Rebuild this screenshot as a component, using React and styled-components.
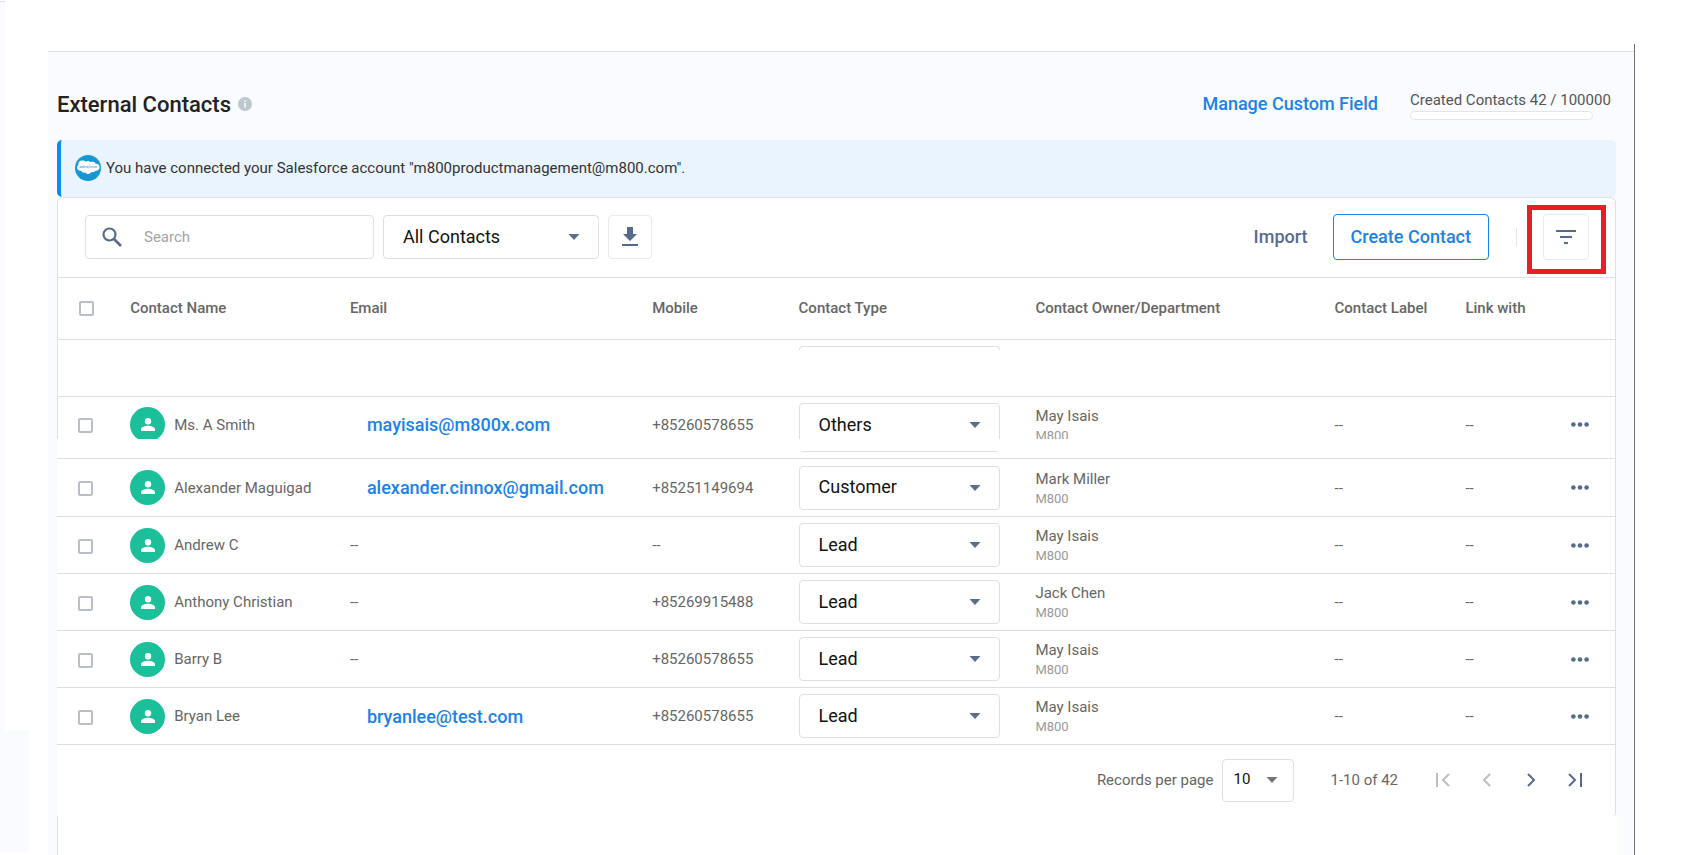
import { useState } from "react";
import styled, { createGlobalStyle, css } from "styled-components";

const contacts = [
  { name: "Ms. A Smith", email: "mayisais@m800x.com", mobile: "+85260578655", type: "Others", owner: "May Isais", height: 62, cut: true },
  { name: "Alexander Maguigad", email: "alexander.cinnox@gmail.com", mobile: "+85251149694", type: "Customer", owner: "Mark Miller", height: 58 },
  { name: "Andrew C", type: "Lead", owner: "May Isais" },
  { name: "Anthony Christian", mobile: "+85269915488", type: "Lead", owner: "Jack Chen" },
  { name: "Barry B", mobile: "+85260578655", type: "Lead", owner: "May Isais" },
  { name: "Bryan Lee", email: "bryanlee@test.com", mobile: "+85260578655", type: "Lead", owner: "May Isais" },
];

const Caret = ({ color = "#5a6e8c" }) => (
  <svg width="12" height="6" viewBox="0 0 12 6" aria-hidden="true">
    <path d="M0.500 0h11L6 6z" fill={color} />
  </svg>
);

const SalesforceLogo = () => (
  <svg width="26" height="26" viewBox="0 0 26 26" aria-hidden="true">
    <circle cx="13" cy="13" r="13" fill="#1798d5" />
    <path
      d="M11 6.700c1-1.100 3.300-1.100 4.300.4 2.300-1 4.700-.2 5.500 1.600 2.300-.2 3.900 1.500 3.800 3.500-.1 2.300-2 3.900-4.200 3.500-1 1.600-2.600 2-4.100 1.400-1.100 2.200-4.400 2.500-5.700.3-1.900.8-3.800.1-4.400-1.600C3.600 16 2 14.400 2 12.600c0-1.100.5-2 1.400-2.700C3 7.500 4.400 5.800 6.600 5.600c1.700-.2 3.300.1 4.400 1.100z"
      fill="#fff"
    />
    <text x="13" y="13" textAnchor="middle" fontSize="4" fontStyle="italic" fill="#1798d5">
      salesforce
    </text>
  </svg>
);

const App = () => {
  const [search, setSearch] = useState("");
  return (
    <>
      <GlobalStyle />
      <Page>
        <Side>
          <SideTop />
          <SideBottom />
        </Side>
        <Main>
          <Header>
            <Title>External Contacts</Title>
            <InfoButton type="button" aria-label="About external contacts">
              <svg width="14" height="14" viewBox="0 0 14 14" aria-hidden="true">
                <circle cx="7" cy="7" r="7" fill="#bcc8cd" />
                <path d="M7 3.200v1.600M7 6v4.500" stroke="#fff" strokeWidth="1.500" />
              </svg>
            </InfoButton>
            <ManageLink href="#custom-field">Manage Custom Field</ManageLink>
            <Quota>
              <span id="quota">Created Contacts 42 / 100000</span>
              <QuotaBar role="progressbar" aria-labelledby="quota" aria-valuenow={42} aria-valuemax={100000} />
            </Quota>
          </Header>
          <Banner>
            <SalesforceLogo />
            You have connected your Salesforce account "m800productmanagement@m800.com".
          </Banner>
          <Card>
            <Toolbar>
              <SearchBox>
                <svg width="20" height="20" viewBox="0 0 20 20" fill="none" stroke="#566b8c" aria-hidden="true">
                  <circle cx="7.500" cy="7.500" r="6" strokeWidth="2.200" />
                  <path d="M12 12l7 7" strokeWidth="2.600" />
                </svg>
                <SearchInput
                  aria-label="Search"
                  placeholder="Search"
                  value={search}
                  onChange={(e) => setSearch(e.target.value)}
                />
              </SearchBox>
              <FilterSelect>
                <Select aria-label="Contact list" defaultValue="All Contacts">
                  <option>All Contacts</option>
                </Select>
                <Caret />
              </FilterSelect>
              <IconButton type="button" aria-label="Download" $width="44px">
                <svg width="16" height="20" viewBox="0 0 16 20" fill="#566b8c" aria-hidden="true">
                  <path d="M5 0h6v7h4l-7 7-7-7h4zM0 17h16v2H0z" />
                </svg>
              </IconButton>
              <ImportButton type="button">Import</ImportButton>
              <CreateButton type="button">Create Contact</CreateButton>
              <Divider />
              <Highlight>
                <IconButton type="button" aria-label="Filter" $width="46px" $height="46px">
                  <svg width="20" height="14" viewBox="0 0 20 14" fill="#566b8c" aria-hidden="true">
                    <path d="M0 0h20v2H0zM4 6h12v2H4zM8 12h4v2H8z" />
                  </svg>
                </IconButton>
              </Highlight>
            </Toolbar>
            <Table>
              <colgroup>
                <col style={{ width: "4.7%" }} />
                <col style={{ width: "14.1%" }} />
                <col style={{ width: "19.4%" }} />
                <col style={{ width: "9.4%" }} />
                <col style={{ width: "15.2%" }} />
                <col style={{ width: "19.2%" }} />
                <col style={{ width: "8.4%" }} />
                <col style={{ width: "6.7%" }} />
                <col style={{ width: "2.9%" }} />
              </colgroup>
              <thead>
                <HeadRow>
                  <th>
                    <Checkbox aria-label="Select all contacts" />
                  </th>
                  <th>Contact Name</th>
                  <th>Email</th>
                  <th>Mobile</th>
                  <th>Contact Type</th>
                  <th>Contact Owner/Department</th>
                  <th>Contact Label</th>
                  <th>Link with</th>
                  <th aria-label="Actions" />
                </HeadRow>
              </thead>
              <tbody>
                <Row $height={57} $edge>
                  <td colSpan={4} />
                  <TopCell>
                    <SelectEdge />
                  </TopCell>
                  <td colSpan={4} />
                </Row>
                {contacts.map((c) => (
                  <Row key={c.name} $height={c.height || 57} $cut={c.cut}>
                    <td>
                      <Checkbox aria-label={`Select ${c.name}`} />
                    </td>
                    <td>
                      <Person>
                        <Avatar>
                          <svg width="14" height="13" viewBox="0 0 14 13" fill="#fff" aria-hidden="true">
                            <circle cx="7" cy="3.200" r="3.200" />
                            <path d="M0 13v-1.500C0 9 4 7.800 7 7.800s7 1.200 7 3.700V13z" />
                          </svg>
                        </Avatar>
                        {c.name}
                      </Person>
                    </td>
                    <td>{c.email ? <MailLink href={`mailto:${c.email}`}>{c.email}</MailLink> : "--"}</td>
                    <td>{c.mobile || "--"}</td>
                    <TypeCell>
                      <TypeSelect $tall={c.cut}>
                        <Select aria-label={`Contact type of ${c.name}`} defaultValue={c.type}>
                          <option>Lead</option>
                          <option>Customer</option>
                          <option>Others</option>
                        </Select>
                        <Caret />
                      </TypeSelect>
                    </TypeCell>
                    <td>
                      <Owner>{c.owner}</Owner>
                      <Department>M800</Department>
                    </td>
                    <td>--</td>
                    <td>--</td>
                    <td>
                      <MoreButton type="button" aria-label={`More actions for ${c.name}`}>
                        <svg width="18" height="5" viewBox="0 0 18 5" fill="#566b8c" aria-hidden="true">
                          <circle cx="2.400" cy="2.500" r="2.300" />
                          <circle cx="9" cy="2.500" r="2.300" />
                          <circle cx="15.600" cy="2.500" r="2.300" />
                        </svg>
                      </MoreButton>
                    </td>
                  </Row>
                ))}
              </tbody>
            </Table>
            <Pager>
              <label htmlFor="page-size">Records per page</label>
              <PageSize>
                <Select id="page-size" defaultValue="10">
                  <option>10</option>
                </Select>
                <Caret color="#757575" />
              </PageSize>
              <Range>1-10 of 42</Range>
              <PageButton type="button" aria-label="First page" disabled>
                <svg width="14" height="14" viewBox="0 0 14 14" aria-hidden="true">
                  <path d="M1 0v14M13 1L7 7l6 6" />
                </svg>
              </PageButton>
              <PageButton type="button" aria-label="Previous page" disabled>
                <svg width="14" height="14" viewBox="0 0 14 14" aria-hidden="true">
                  <path d="M10 1L4 7l6 6" />
                </svg>
              </PageButton>
              <PageButton type="button" aria-label="Next page">
                <svg width="14" height="14" viewBox="0 0 14 14" aria-hidden="true">
                  <path d="M4 1l6 6-6 6" />
                </svg>
              </PageButton>
              <PageButton type="button" aria-label="Last page">
                <svg width="14" height="14" viewBox="0 0 14 14" aria-hidden="true">
                  <path d="M1 1l6 6-6 6M13 0v14" />
                </svg>
              </PageButton>
            </Pager>
          </Card>
          <Rest />
        </Main>
      </Page>
    </>
  );
};

export default App;

const GlobalStyle = createGlobalStyle`
  * {
    box-sizing: border-box;
  }
  body {
    margin: 0;
    background: #fff;
    color: #666;
    font-family: Roboto, "Liberation Sans", sans-serif;
    font-size: 15px;
  }
  button, input, select {
    font-family: inherit;
  }
`;

const Page = styled.div`
  display: flex;
  min-height: 100vh;
`;

const Side = styled.div`
  flex: none;
  display: flex;
  flex-direction: column;
  width: 48px;
  padding: 1px 0 3px;
`;

const SideTop = styled.div`
  flex: 1;
  width: 5px;
  border-top: 1px solid #dfe1e6;
  background: #fafbff;
`;

const SideBottom = styled.div`
  width: 29px;
  height: 122px;
  background: #fafbff;
`;

const Main = styled.main`
  flex: 1;
  display: flex;
  flex-direction: column;
  margin: 44px 69px 0 0;
  padding: 0 18px 0 9px;
  border-right: 1px solid #6e7074;
  background: linear-gradient(#fff 7px, #dfe0e3 7px, #dfe0e3 8px, #fafbff 8px);
`;

const Header = styled.header`
  display: flex;
  align-items: center;
  height: 96px;
  padding-top: 24px;
`;

const Title = styled.h1`
  margin: 0;
  color: #222;
  font-weight: 500;
  font-size: 22px;
`;

const InfoButton = styled.button`
  display: flex;
  margin-left: 7px;
  padding: 0;
  border: 0;
  background: none;
`;

const ManageLink = styled.a`
  margin-left: auto;
  padding-bottom: 2px;
  color: #1a82e8;
  font-weight: 500;
  font-size: 18px;
  text-decoration: none;
`;

const Quota = styled.div`
  min-width: 206px;
  margin-left: 32px;
  padding-top: 2px;
  color: #555;
  line-height: 18px;
`;

const QuotaBar = styled.div`
  width: 183px;
  height: 9px;
  margin-top: 2px;
  border: 1px solid #e3e5e9;
  border-radius: 5px;
  background: #fff;
`;

const Banner = styled.div`
  display: flex;
  align-items: center;
  gap: 5px;
  height: 57px;
  padding: 0 0 2px 14px;
  border-left: 4px solid #0b8cf0;
  border-radius: 5px;
  background: #e9f4ff;
  color: #333;
`;

const Card = styled.section`
  border: solid #dddfe3;
  border-width: 1px 1px 0 0;
  border-radius: 6px 6px 4px 0;
  background: #fff;
`;

const Toolbar = styled.div`
  display: flex;
  align-items: center;
  height: 80px;
  padding: 0 26px 1px 27px;
  border: solid #dddfe3;
  border-width: 0 0 1px 1px;
  border-top-left-radius: 5px;
`;

const field = css`
  border: 1px solid #dddfe3;
  border-radius: 4px;
  background: #fff;
`;

const SearchBox = styled.div`
  ${field}
  display: flex;
  align-items: center;
  gap: 22px;
  width: 289px;
  height: 44px;
  padding: 0 16px;
`;

const SearchInput = styled.input`
  flex: 1;
  min-width: 0;
  padding: 0;
  border: 0;
  outline: 0;
  color: #333;
  font-size: 15px;
  &::placeholder {
    color: #a4a4a4;
  }
`;

const SelectBox = styled.div`
  ${field}
  display: grid;
  align-items: center;
  height: 44px;
  svg {
    grid-area: 1 / 1;
    justify-self: end;
    margin-right: 18px;
    pointer-events: none;
  }
`;

const Select = styled.select`
  grid-area: 1 / 1;
  width: 100%;
  height: 100%;
  padding: 0 19px 2px;
  border: 0;
  outline: 0;
  appearance: none;
  background: none;
  color: #111;
  font-size: 18px;
`;

const FilterSelect = styled(SelectBox)`
  width: 216px;
  margin: 0 9px;
`;

const TypeSelect = styled(SelectBox)`
  width: 201px;
  height: ${({ $tall }) => ($tall ? "49px" : "44px")};
  ${({ $tall }) =>
    $tall &&
    css`
      padding-bottom: 5px;
    `}
`;

const IconButton = styled.button`
  ${field}
  display: flex;
  align-items: center;
  justify-content: center;
  width: ${({ $width }) => $width};
  height: ${({ $height }) => $height || "44px"};
  padding: 0;
  border-color: #e8eaed;
`;

const ImportButton = styled.button`
  margin-left: auto;
  padding: 0 0 2px;
  border: 0;
  background: none;
  color: #566b8c;
  font-weight: 500;
  font-size: 18px;
`;

const CreateButton = styled.button`
  height: 46px;
  margin-left: 25px;
  padding: 0 17px 2px;
  border: 1px solid #1a82e8;
  border-radius: 4px;
  background: #fff;
  color: #1a82e8;
  font-weight: 500;
  font-size: 18px;
`;

const Divider = styled.div`
  width: 1px;
  height: 18px;
  margin: 0 26px 0 27px;
  background: #e3e5e8;
`;

const Highlight = styled.div`
  position: relative;
  &::after {
    content: "";
    position: absolute;
    inset: -9px -17px -14px -16px;
    border: 5px solid #e51f28;
    pointer-events: none;
  }
`;

const Table = styled.table`
  width: 100%;
  border-collapse: separate;
  border-spacing: 0;
  table-layout: fixed;
  th,
  td {
    padding: 0;
    border-bottom: 1px solid #dedede;
    text-align: left;
    white-space: nowrap;
  }
`;

const edge = css`
  & > :first-child {
    border-left: 1px solid #dddfe3;
  }
`;

const HeadRow = styled.tr`
  height: 62px;
  ${edge}
  th {
    padding-bottom: 2px;
    font-weight: 500;
  }
`;

const TypeCell = styled.td``;

// a cut row is blank in a strip above its lower line
const Row = styled.tr`
  position: relative;
  height: ${({ $height }) => $height}px;
  ${({ $edge }) => $edge && edge}
  ${({ $cut }) =>
    $cut &&
    css`
      td:not(${TypeCell}) {
        padding-bottom: 6px;
      }
      td:first-child {
        background: linear-gradient(#dddfe3, #dddfe3) 0 0 / 1px 42px no-repeat;
      }
      &::after {
        content: "";
        position: absolute;
        left: 0;
        right: 0;
        bottom: 8px;
        height: 12px;
        background: #fff;
      }
    `}
`;

const Checkbox = styled.input.attrs({ type: "checkbox" })`
  display: block;
  appearance: none;
  width: 15px;
  height: 15px;
  margin: 2px 0 0 21px;
  border: 2px solid #b9bec8;
  border-radius: 2px;
  background: #fff;
`;

const TopCell = styled.td`
  vertical-align: top;
`;

const SelectEdge = styled.div`
  width: 201px;
  height: 4px;
  margin-top: 6px;
  border: 1px solid #dedede;
  border-bottom: 0;
  border-radius: 4px 4px 0 0;
`;

const Person = styled.div`
  display: flex;
  align-items: center;
  gap: 9px;
`;

const Avatar = styled.span`
  display: flex;
  align-items: center;
  justify-content: center;
  width: 35px;
  height: 35px;
  border-radius: 50%;
  background: #1bbf9a;
`;

const MailLink = styled.a`
  margin-left: 17px;
  color: #1a82e8;
  font-weight: 500;
  font-size: 18px;
  text-decoration: none;
`;

const Owner = styled.div`
  padding-top: 2px;
  line-height: 20px;
`;

const Department = styled.div`
  color: #999;
  font-size: 13px;
  line-height: 20px;
`;

const MoreButton = styled.button`
  display: flex;
  margin-left: auto;
  margin-right: 26px;
  padding: 0;
  border: 0;
  background: none;
`;

const Pager = styled.div`
  display: flex;
  align-items: center;
  justify-content: flex-end;
  height: 71px;
  padding: 0 33px 1px 0;
`;

const PageSize = styled(SelectBox)`
  width: 72px;
  margin: 0 36px 0 9px;
  height: 43px;
  ${Select} {
    padding: 0 10px 2px;
    font-size: 15px;
  }
  svg {
    margin-right: 15px;
  }
`;

const Range = styled.span`
  margin-right: 38px;
`;

const PageButton = styled.button`
  display: flex;
  padding: 0;
  border: 0;
  background: none;
  & + & {
    margin-left: 30px;
  }
  path {
    fill: none;
    stroke: ${({ disabled }) => (disabled ? "#bdbdbd" : "#566b8c")};
    stroke-width: 2;
  }
`;

const Rest = styled.div`
  flex: 1;
  margin-right: -3px;
  border-left: 1px solid #dddfe3;
  background: #fff;
`;
